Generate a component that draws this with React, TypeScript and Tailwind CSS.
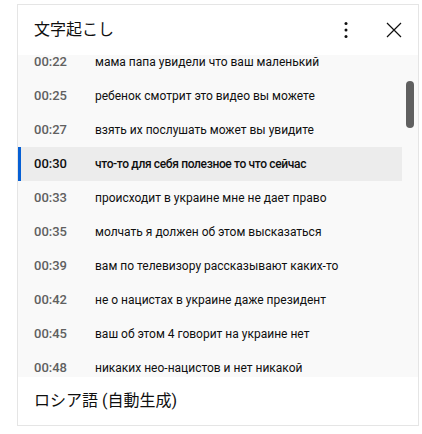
const rows = [
  { t: '00:22', s: 'мама папа увидели что ваш маленький' },
  { t: '00:25', s: 'ребенок смотрит это видео вы можете' },
  { t: '00:27', s: 'взять их послушать может вы увидите' },
  { t: '00:30', s: 'что-то для себя полезное то что сейчас', active: true },
  { t: '00:33', s: 'происходит в украине мне не дает право' },
  { t: '00:35', s: 'молчать я должен об этом высказаться' },
  { t: '00:39', s: 'вам по телевизору рассказывают каких-то' },
  { t: '00:42', s: 'не о нацистах в украине даже президент' },
  { t: '00:45', s: 'ваш об этом 4 говорит на украине нет' },
  { t: '00:48', s: 'никаких нео-нацистов и нет никакой' },
  { t: '00:51', s: 'нацистской идеологии' },
];

export default function App() {
  return (
    <div className="w-[422px] h-[434px] bg-white pt-1 pl-[17px] font-['Roboto','Noto_Sans_CJK_JP',sans-serif]">
      <div className="w-[402px] h-[422px] border border-[#e5e5e5] flex flex-col bg-white">
        <div className="h-[50px] shrink-0 flex items-center pl-4 pr-3 relative z-10 bg-white">
          <span className="text-[16px] text-[#0f0f0f] flex-1">文字起こし</span>
          <svg width="24" height="24" viewBox="0 0 24 24" className="mr-6">
            <circle cx="12" cy="5.5" r="1.5" fill="#0f0f0f" />
            <circle cx="12" cy="12" r="1.5" fill="#0f0f0f" />
            <circle cx="12" cy="18.5" r="1.5" fill="#0f0f0f" />
          </svg>
          <svg width="24" height="24" viewBox="0 0 24 24">
            <path d="M5 5L19 19M19 5L5 19" stroke="#0f0f0f" strokeWidth="1.2" fill="none" />
          </svg>
        </div>
        <div className="flex-1 bg-[#f9f9f9] overflow-hidden relative">
          <div className="mt-[-10px] mr-4">
            {rows.map((r) => (
              <div
                key={r.t}
                className={`h-[34px] flex items-center ${r.active ? 'bg-[#ececec] border-l-[3px] border-[#065fd4] pl-[13px]' : 'pl-4'}`}
              >
                <span className={`w-[61px] text-[13px] font-medium ${r.active ? 'text-[#0f0f0f]' : 'text-[#606060]'}`}>{r.t}</span>
                <span className={`text-[12px] text-[#0f0f0f] ${r.active ? 'font-medium tracking-[-0.35px]' : ''}`}>{r.s}</span>
              </div>
            ))}
          </div>
          <div className="absolute right-[4px] top-[26px] w-2 h-[47px] rounded bg-[#606060]" />
        </div>
        <div className="h-[48px] shrink-0 flex items-center pl-4 bg-white">
          <span className="text-[16px] text-[#0f0f0f]">ロシア語 (自動生成)</span>
        </div>
      </div>
    </div>
  );
}
